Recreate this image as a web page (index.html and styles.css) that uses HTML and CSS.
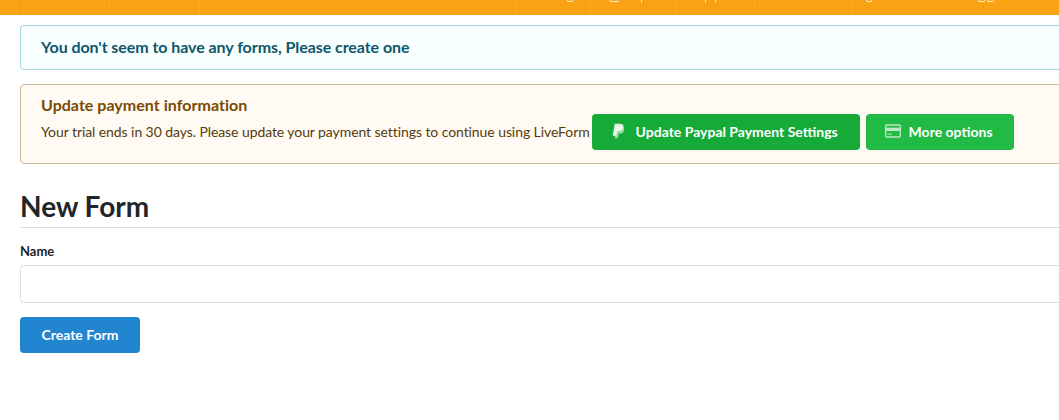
FILE: index.html
```html
<!DOCTYPE html>
<html lang="en">
<head>
<meta charset="utf-8">
<title>New Form</title>
<link rel="stylesheet" href="styles.css">
</head>
<body>
<nav class="topbar">
  <div class="nav-left">
    <span class="nav-item nav-a"></span>
    <span class="nav-item nav-b"></span>
    <span class="nav-item nav-c"></span>
  </div>
  <div class="nav-right">
    <span class="nav-item nav-d"><span class="mark arc arc-d"></span></span>
    <span class="nav-item nav-e"><span class="mark arc arc-e"></span><span class="mark stem stem-e"></span></span>
    <span class="nav-item nav-f"><span class="mark stem stem-f1"></span><span class="mark stem stem-f2"></span></span>
    <span class="nav-item nav-g"></span>
    <span class="nav-item nav-h"><span class="mark arc arc-h1"></span><span class="mark arc arc-h2"></span><span class="mark arc arc-h3"></span></span>
  </div>
</nav>
<main class="page">
  <div class="message info">You don't seem to have any forms, Please create one</div>
  <div class="message warning">
    <div class="warning-title">Update payment information</div>
    <div class="warning-row">
      <span class="warning-text">Your trial ends in 30 days. Please update your payment settings to continue using LiveForm</span>
      <a class="btn btn-paypal">
        <svg class="icon icon-paypal" viewBox="0 0 24 24"><path d="M7 1h8c4 0 6 2 5.400 5.400C19.700 10 17 12 13.500 12h-2.800l-1 7H4z" fill="#fff" fill-opacity=".85"/><path d="M9.500 6h7.500c3 0 4.800 2 4.200 5-.6 3.500-3.200 5-6.200 5h-2l-1 7H7z" fill="#fff" fill-opacity=".55"/></svg>
        <span>Update Paypal Payment Settings</span>
      </a>
      <a class="btn btn-more">
        <svg class="icon" viewBox="0 0 24 24"><rect x="1" y="3" width="22" height="18" rx="1.500" fill="none" stroke="#fff" stroke-opacity=".7" stroke-width="2"/><rect x="2" y="7" width="20" height="5" fill="#fff" fill-opacity=".7"/><rect x="4" y="16" width="6" height="1.500" fill="#fff" fill-opacity=".7"/></svg>
        <span>More options</span>
      </a>
    </div>
  </div>
  <h1 class="title">New Form</h1>
  <label class="field-label" for="name">Name</label>
  <input class="field-input" id="name" type="text">
  <button class="btn-create" type="button">Create Form</button>
</main>
</body>
</html>
```
FILE: styles.css
```css
* { box-sizing: border-box; }
html, body { margin: 0; padding: 0; height: 420px; overflow: hidden; background: #fff; }
body { font-family: Lato, "Liberation Sans", sans-serif; font-size: 14px; color: #212529; }
.topbar { height: 15px; background: #f9a314; display: flex; justify-content: space-between; overflow: hidden; }
.nav-left, .nav-right { display: flex; }
.nav-item { display: flex; align-items: flex-start; height: 15px; border-left: 1px solid rgba(255,255,255,.08); }
.mark { display: block; flex: none; }
.arc { height: 2px; border: 1px solid rgba(255,255,255,.85); border-top: 0; border-radius: 0 0 4px 4px; }
.stem { width: 1px; height: 2px; background: rgba(255,255,255,.85); }
.arc-d { width: 6px; margin-left: 50px; }
.arc-e { width: 10px; margin-left: 18px; }
.stem-e { margin-left: 22px; }
.stem-f1 { margin-left: 29px; }
.stem-f2 { margin-left: 9px; }
.arc-h1 { width: 6px; margin-left: 14px; }
.arc-h2 { width: 7px; margin-left: 106px; }
.arc-h3 { width: 7px; margin-left: 2px; }
.nav-a { width: 89px; margin-left: 20px; border-left-color: rgba(0,0,0,.05); }
.nav-b { width: 90px; }
.nav-c { width: 1px; }
.nav-d { width: 74px; }
.nav-e { width: 85px; }
.nav-f { width: 79px; }
.nav-g { width: 97px; }
.nav-h { width: 208px; }
.page { width: 1079px; padding: 10px 0 0 20px; }
.message { border: 1px solid; border-radius: 4px; }
.info { height: 45px; padding: 0 20px 3px; display: flex; align-items: center; background: #f8ffff; border-color: #a9d5de; color: #0e566c; font-size: 16px; font-weight: 700; letter-spacing: -0.06px; }
.warning { height: 80px; margin-top: 14px; padding: 10px 20px 0; background: #fffaf3; border-color: #c9ba9b; color: #573a08; font-size: 14px; }
.warning-title { color: #794b02; font-size: 16px; font-weight: 700; line-height: 19px; letter-spacing: 0.03px; }
.warning-row { display: flex; align-items: center; margin-top: 0; white-space: nowrap; }
.warning-text { padding-bottom: 2px; letter-spacing: -0.078px; }
.btn { display: flex; align-items: center; height: 36px; margin-left: 2px; padding-bottom: 2px; border-radius: 4px; color: #fff; font-size: 14px; font-weight: 700; }
.btn-paypal { width: 268px; padding-left: 18px; background: #16ab39; }
.btn-more { width: 148px; margin-left: 6px; padding-left: 19px; background: #21ba45; }
.icon { width: 16px; height: 16px; margin-right: 8px; flex: none; }
.icon-paypal { margin-right: 10px; }
.title { margin: 26px 0 0; height: 38px; font-size: 28px; line-height: 33px; font-weight: 700; border-bottom: 1px solid #dedede; color: #212529; }
.field-label { display: block; margin-top: 16px; font-size: 13px; font-weight: 700; line-height: 15px; }
.field-input { display: block; width: 100%; height: 38px; margin-top: 6px; padding: 0 14px; border: 1px solid #dedede; border-radius: 4px; background: #fff; }
.btn-create { display: block; width: 120px; height: 36px; margin-top: 14px; padding: 0 0 2px; border: 0; border-radius: 4px; background: #2185d0; color: #fff; font-family: inherit; font-size: 14px; font-weight: 700; }
```
